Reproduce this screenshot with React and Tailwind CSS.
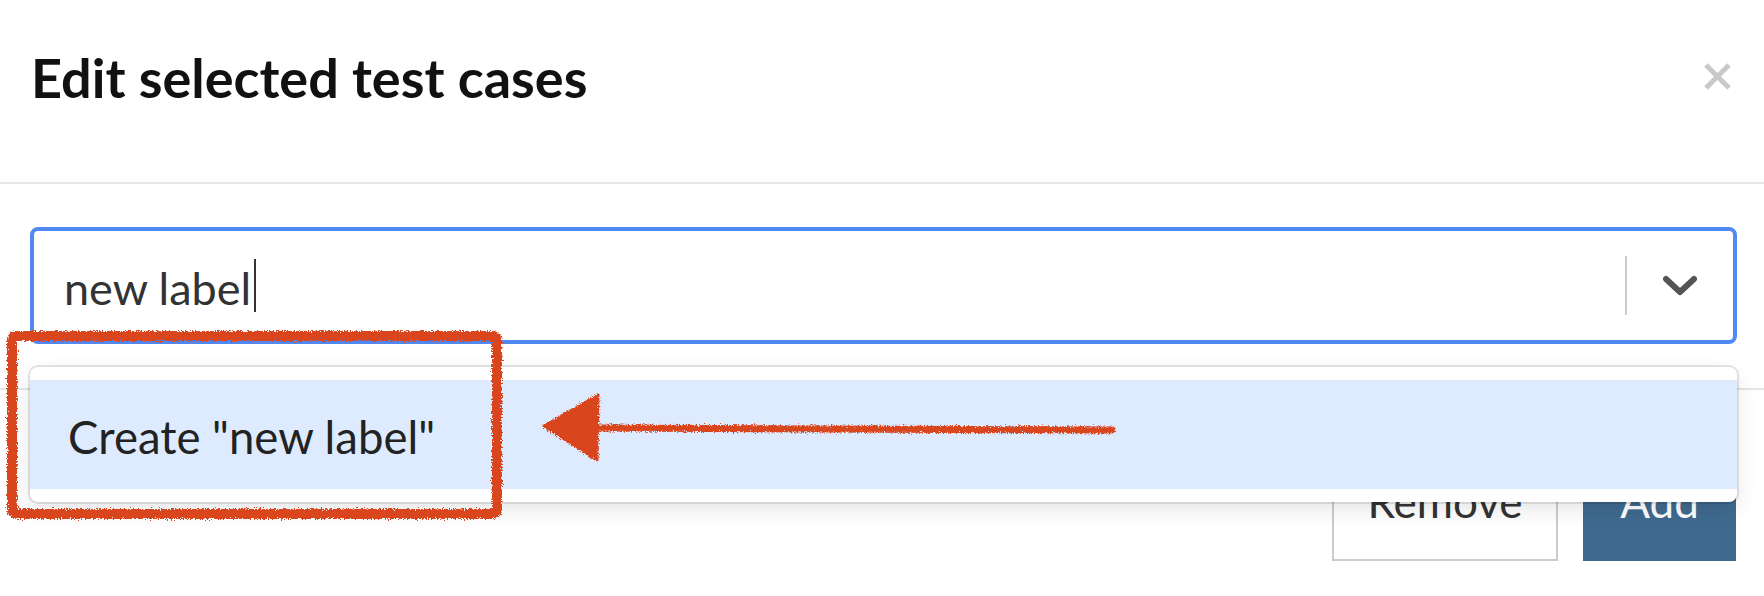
import React from "react";

function CloseIcon() {
  return (
    <svg className="mt-[62px] h-[29px] w-[29px]" viewBox="0 0 29 29">
      <path d="M3 3 L26 26 M26 3 L3 26" stroke="#c9c9c9" strokeWidth="5" strokeLinecap="butt" fill="none" />
    </svg>
  );
}

function Chevron() {
  return (
    <svg className="h-[21px] w-[36px]" viewBox="0 0 36 21">
      <polyline points="4,4 18,17 32,4" stroke="#555" strokeWidth="6" strokeLinecap="round" strokeLinejoin="round" fill="none" />
    </svg>
  );
}

function Annotation() {
  return (
    <svg className="pointer-events-none absolute left-0 top-0 h-[596px] w-[1764px]" viewBox="0 0 1764 596">
      <defs>
        <filter id="rough" x="-5%" y="-5%" width="110%" height="110%">
          <feTurbulence type="fractalNoise" baseFrequency="0.7" numOctaves="2" seed="3" result="noise" />
          <feDisplacementMap in="SourceGraphic" in2="noise" scale="6" xChannelSelector="R" yChannelSelector="G" />
        </filter>
      </defs>
      <g filter="url(#rough)" stroke="#d9441f" fill="none">
        <rect x="12" y="336" width="485" height="178" rx="4" strokeWidth="10" />
        <path d="M596 428 L1112 430" strokeWidth="7" strokeLinecap="round" />
        <path d="M544 426 L598 395 L597 460 Z" fill="#d9441f" strokeWidth="3" strokeLinejoin="round" />
      </g>
    </svg>
  );
}

export default function App() {
  return (
    <div className="relative h-[596px] w-[1764px] overflow-hidden bg-white font-['Lato','Noto_Sans',sans-serif]">
      {/* Header */}
      <div className="flex h-[184px] items-start justify-between border-b-2 border-[#e6e6e6] pl-[31px] pr-[32px]">
        <h1 className="pt-[50px] text-[54px] font-bold leading-[56px] text-[#111]">Edit selected test cases</h1>
        <CloseIcon />
      </div>

      {/* Body */}
      <div className="h-[204px] pl-[30px] pr-[27px] pt-[43px]">
        <div className="flex h-[117px] items-center rounded-[8px] border-4 border-[#5189f3] bg-white pl-[30px]">
          <div className="flex flex-1 items-center">
            <span className="mt-[6px] text-[45px] leading-[45px] text-[#333]">new label</span>
            <span className="ml-[3px] h-[53px] w-[2px] bg-[#333]" />
          </div>
          <div className="h-[59px] w-[2px] bg-[#cccccc]" />
          <div className="flex w-[106px] items-center justify-center">
            <Chevron />
          </div>
        </div>
      </div>

      {/* Footer */}
      <div className="flex h-[208px] items-start justify-end gap-[25px] border-t-2 border-[#e6e6e6] pr-[28px] pt-[51px]">
        <button className="flex h-[120px] w-[226px] items-center justify-center border-2 border-[#cccccc] bg-white text-[44px] leading-[44px] text-[#333]">
          Remove
        </button>
        <button className="flex h-[120px] w-[153px] items-center justify-center bg-[#3f6a8f] text-[44px] leading-[44px] text-white">
          Add
        </button>
      </div>

      {/* Dropdown menu */}
      <div className="absolute left-[30px] top-[367px] w-[1707px] rounded-[8px] bg-white py-[13px] shadow-[0_0_0_2px_rgba(0,0,0,0.1),0_8px_22px_rgba(0,0,0,0.1)]">
        <div className="flex h-[109px] items-center bg-[#deebff] pl-[38px] pt-[4px] text-[45.5px] leading-[45px] text-[#222]">
          Create "new label"
        </div>
      </div>

      <Annotation />
    </div>
  );
}
